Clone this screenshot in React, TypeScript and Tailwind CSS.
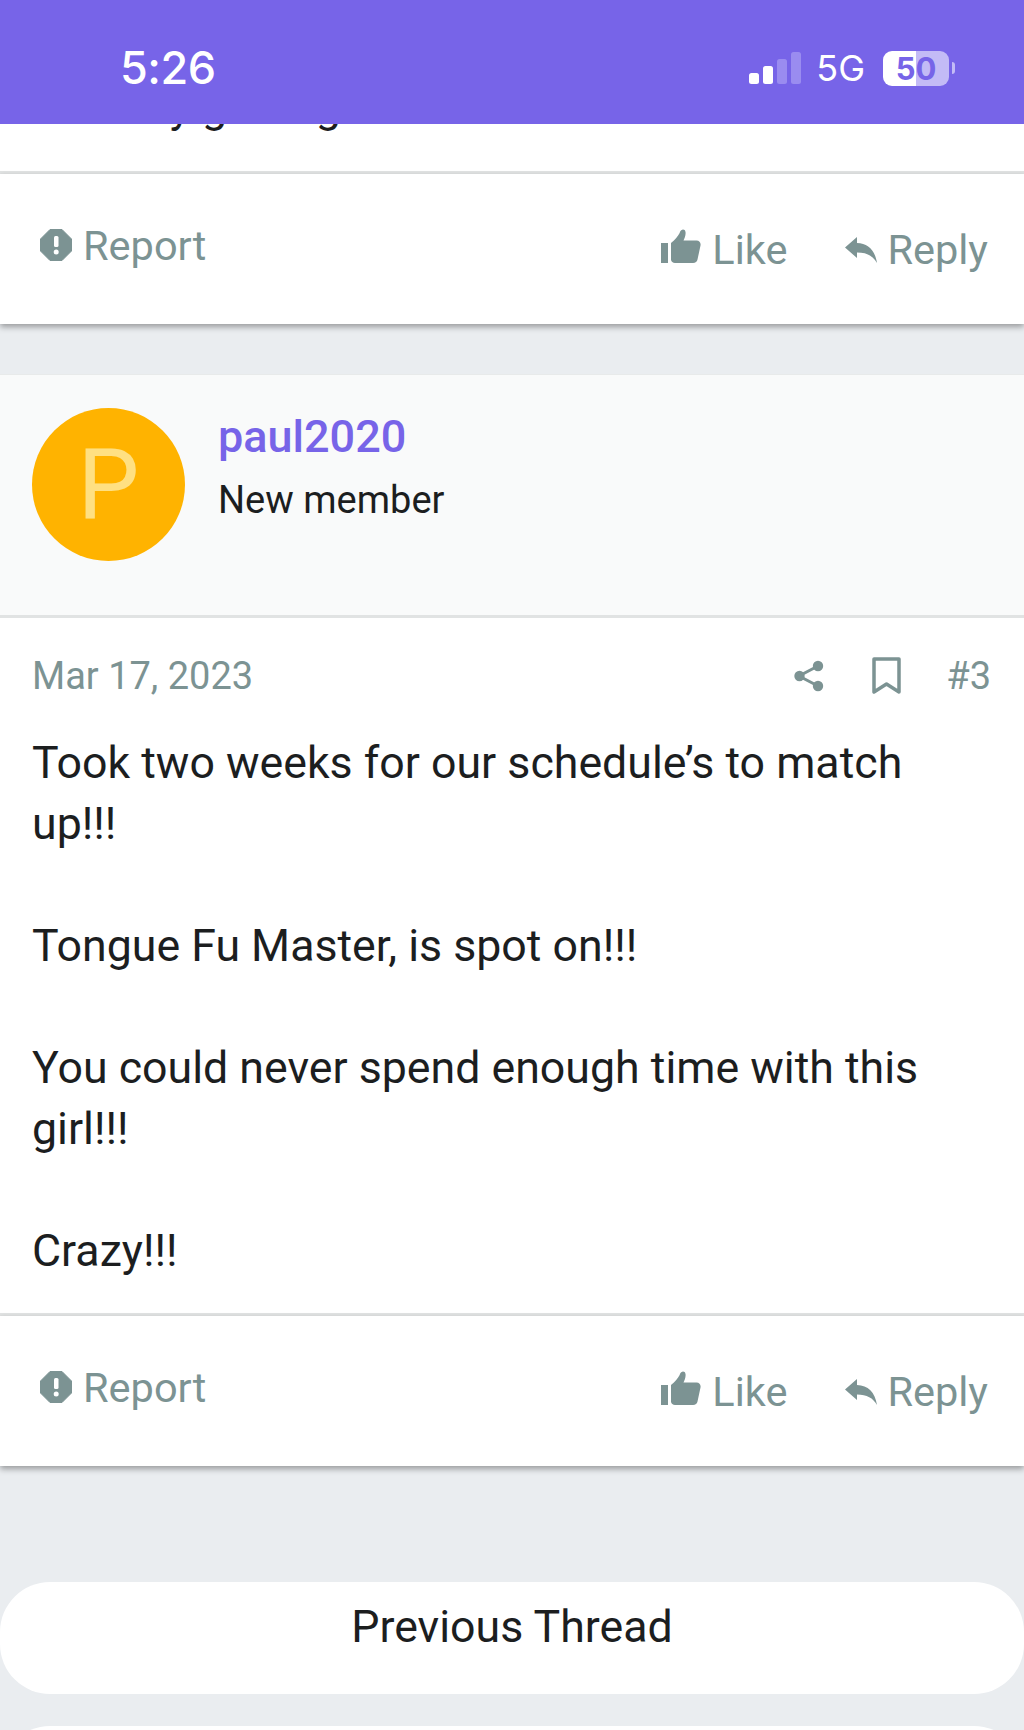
import React from "react";

const ReportIcon = () => (
  <svg viewBox="0 0 32 32" className="w-[32px] h-[32px] shrink-0">
    <path d="M10 0.5h12l9.5 9.5v12l-9.5 9.500h-12l-9.500-9.500v-12z" fill="#7c9393" strokeLinejoin="round" stroke="#7c9393" />
    <rect x="14" y="7" width="4.500" height="11" rx="1.500" fill="#fff" />
    <circle cx="16.200" cy="23" r="2.500" fill="#fff" />
  </svg>
);

const ThumbIcon = () => (
  <svg viewBox="0 0 40 34" className="w-[40px] h-[34px] shrink-0">
    <rect x="0" y="14" width="7" height="20" fill="#7c9393" />
    <path d="M10 14c4-3 8-8 9-11 1-3 5-3.500 5.500 0 .5 3-1 6.500-2 8.500h13c3 0 4.500 2.500 4 5l-3 14c-.5 2-2 3.500-4.500 3.500h-18c-2 0-4-1.500-4-3.500z" fill="#7c9393" />
  </svg>
);

const ReplyIcon = () => (
  <svg viewBox="0 0 32 26" className="w-[32px] h-[26px] shrink-0">
    <path d="M0 10.500 12 0v6c11 .5 18 7 20 20-4-7-10-10.500-20-10.500V21z" fill="#7c9393" />
  </svg>
);

const ShareIcon = () => (
  <svg viewBox="0 0 30 32" className="w-[30px] h-[32px] shrink-0">
    <path d="M24 6 5 16l19 10" fill="none" stroke="#7c9393" strokeWidth="3" />
    <circle cx="24" cy="6" r="5.200" fill="#7c9393" />
    <circle cx="5.500" cy="16" r="5.200" fill="#7c9393" />
    <circle cx="24" cy="26" r="5.200" fill="#7c9393" />
  </svg>
);

const BookmarkIcon = () => (
  <svg viewBox="0 0 29 38" className="w-[29px] h-[38px] shrink-0">
    <path d="M2 2h25v33l-12.500-8L2 35z" fill="none" stroke="#7c9393" strokeWidth="3.500" strokeLinejoin="round" />
  </svg>
);

const ActionBar = () => (
  <div className="h-[150px] bg-white shadow-[0_3px_6px_rgba(0,0,0,0.35)] flex justify-between pl-[40px] pr-[36px] pt-[47px] text-[41.5px] leading-[50px] text-[#7c9393] relative">
    <div className="flex items-start gap-[11px] h-[50px]">
      <div className="mt-[8px]"><ReportIcon /></div>
      <span>Report</span>
    </div>
    <div className="flex items-start pt-[4px]">
      <div className="mt-[4px]"><ThumbIcon /></div>
      <span className="ml-[11px]">Like</span>
      <div className="ml-[58px] mt-[12px]"><ReplyIcon /></div>
      <span className="ml-[10px]">Reply</span>
    </div>
  </div>
);

export default function App() {
  return (
    <div className="w-[1024px] h-[1730px] overflow-hidden bg-[#eaedf0] font-['Roboto',sans-serif] text-[#1c1e1f]">
      <div className="h-[124px] bg-[#7764e8] flex justify-between text-white relative">
        <span className="ml-[120px] mt-[39px] text-[45px] leading-[58px] font-medium font-['Inter',sans-serif] tracking-[-0.5px]">5:26</span>
        <div className="flex items-center mt-[12px] mr-[69px] h-[112px]">
          <svg viewBox="0 0 52 32" className="w-[52px] h-[32px]">
            <rect x="0" y="21" width="10" height="11" rx="2.500" fill="#fff" />
            <rect x="14" y="14" width="10" height="18" rx="2.500" fill="#fff" />
            <rect x="28" y="7" width="10" height="25" rx="2.500" fill="#9a8cf0" />
            <rect x="42" y="0" width="10" height="32" rx="2.500" fill="#9a8cf0" />
          </svg>
          <span className="ml-[15px] text-[36px] font-['Inter',sans-serif] leading-none">5G</span>
          <div className="ml-[18px] w-[66px] h-[35px] rounded-[9px] overflow-hidden flex relative">
            <div className="w-[33px] bg-white"></div>
            <div className="w-[33px] bg-[#c3bbf6]"></div>
            <span className="absolute inset-0 flex items-center justify-center text-[31px] leading-none font-bold font-['Inter',sans-serif] text-[#7764e8]">50</span>
          </div>
          <div className="ml-[3px] w-[3px] h-[12px] rounded-r-full bg-[#c3bbf6]"></div>
        </div>
      </div>

      <div className="h-[47px] bg-white overflow-hidden flex flex-col justify-end pb-[33px] pl-[32px] text-[44.7px] leading-[61px]">
        <div className="shrink-0">Actually getting</div>
      </div>
      <div className="h-[3px] bg-[#e1e3e3]"></div>
      <ActionBar />

      <div className="mt-[50px] h-[241px] bg-[#f9fafa] border-t border-[#e8eaea] flex items-start pl-[32px] pt-[33px]">
        <div className="w-[153px] h-[153px] rounded-full bg-[#ffb300] flex items-center justify-center text-[#ffe082] text-[98px] leading-none">P</div>
        <div className="ml-[33px]">
          <div className="text-[45px] leading-[56px] font-medium text-[#7764e8] mt-[1px]">paul2020</div>
          <div className="text-[38px] leading-[46px] mt-[12px]">New member</div>
        </div>
      </div>
      <div className="h-[3px] bg-[#e1e3e3]"></div>

      <div className="bg-white h-[695px] pl-[32px] pr-[33px] pt-[36px] flex flex-col">
        <div className="flex items-center justify-between h-[44px] text-[38px] text-[#7c9393]">
          <span>Mar 17, 2023</span>
          <div className="flex items-center">
            <ShareIcon />
            <div className="ml-[48px]"><BookmarkIcon /></div>
            <span className="ml-[45px]">#3</span>
          </div>
        </div>
        <div className="mt-[35px] text-[44.7px] leading-[61px]">
          <p>Took two weeks for our schedule’s to match up!!!</p>
          <p className="mt-[61px]">Tongue Fu Master, is spot on!!!</p>
          <p className="mt-[61px]">You could never spend enough time with this girl!!!</p>
          <p className="mt-[61px]">Crazy!!!</p>
        </div>
      </div>
      <div className="h-[3px] bg-[#e1e3e3]"></div>
      <ActionBar />

      <div className="mt-[116px] h-[112px] bg-white rounded-[50px] flex items-center justify-center text-[44.7px] pb-[20px]">Previous Thread</div>
      <div className="mt-[32px] h-[112px] bg-white rounded-[50px]"></div>
    </div>
  );
}
